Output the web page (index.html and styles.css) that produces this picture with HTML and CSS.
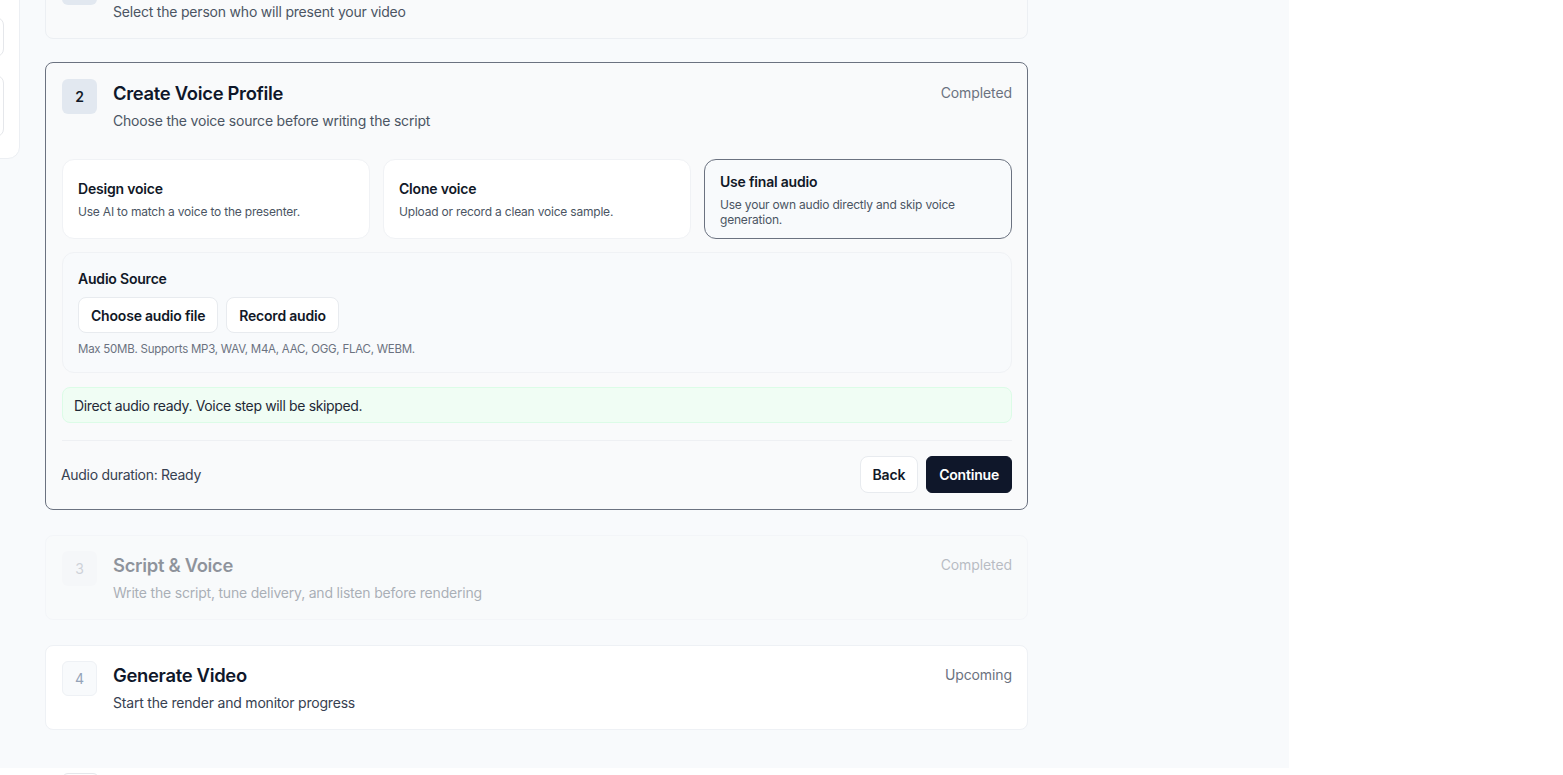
FILE: index.html
```html
<!DOCTYPE html>
<html lang="en">
<head>
  <meta charset="UTF-8" />
  <meta name="viewport" content="width=device-width, initial-scale=1.0">
  <title>Create video</title>
  <link rel="stylesheet" href="styles.css">
</head>
<body>

  <div class="layout">
    <div class="workspace">

      <!-- left project panel (collapsed off to the side) -->
      <aside class="side-strip">
        <div class="side-panel">
          <div class="side-item"></div>
          <div class="side-item tall"></div>
        </div>
      </aside>

      <main class="steps">

        <!-- step 1 -->
        <section class="step step-done first">
          <div class="step-head">
            <div class="step-num">1</div>
            <div class="step-text">
              <h2>Choose Presenter</h2>
              <p>Select the person who will present your video</p>
            </div>
            <span class="step-status">Completed</span>
          </div>
        </section>

        <!-- step 2 (active) -->
        <section class="step step-active">
          <div class="step-head">
            <div class="step-num">2</div>
            <div class="step-text">
              <h2>Create Voice Profile</h2>
              <p>Choose the voice source before writing the script</p>
            </div>
            <span class="step-status">Completed</span>
          </div>

          <div class="voice-options">
            <div class="option">
              <strong>Design voice</strong>
              <span>Use AI to match a voice to the presenter.</span>
            </div>
            <div class="option">
              <strong>Clone voice</strong>
              <span>Upload or record a clean voice sample.</span>
            </div>
            <div class="option selected">
              <strong>Use final audio</strong>
              <span>Use your own audio directly and skip voice generation.</span>
            </div>
          </div>

          <div class="audio-source">
            <div class="source-label">Audio Source</div>
            <div class="source-buttons">
              <button class="btn">Choose audio file</button>
              <button class="btn">Record audio</button>
            </div>
            <div class="source-hint">Max 50MB. Supports MP3, WAV, M4A, AAC, OGG, FLAC, WEBM.</div>
          </div>

          <div class="notice">Direct audio ready. Voice step will be skipped.</div>

          <div class="step-footer">
            <span class="duration">Audio duration: Ready</span>
            <div class="footer-actions">
              <button class="btn">Back</button>
              <button class="btn btn-dark">Continue</button>
            </div>
          </div>
        </section>

        <!-- step 3 -->
        <section class="step step-faded">
          <div class="step-head">
            <div class="step-num">3</div>
            <div class="step-text">
              <h2>Script &amp; Voice</h2>
              <p>Write the script, tune delivery, and listen before rendering</p>
            </div>
            <span class="step-status">Completed</span>
          </div>
        </section>

        <!-- step 4 -->
        <section class="step step-upcoming">
          <div class="step-head">
            <div class="step-num">4</div>
            <div class="step-text">
              <h2>Generate Video</h2>
              <p>Start the render and monitor progress</p>
            </div>
            <span class="step-status">Upcoming</span>
          </div>
        </section>

      </main>
    </div>

    <div class="right-side"></div>
  </div>

  <div class="below">
    <div class="below-box"></div>
  </div>

</body>
</html>
```

FILE: styles.css
```css
body {
  font-family: Inter, 'Noto Sans', sans-serif;
  margin: 0;
  background-color: #fff;
  color: #111827;
  overflow: hidden;
}

.layout {
  display: flex;
  height: 768px;
}

.workspace {
  width: 1289px;
  display: flex;
  background-color: #f8fafc;
  overflow: hidden;
}

.right-side {
  flex: 1;
  background: #fff;
}

/* narrow strip with the edge of the project panel */
.side-strip {
  width: 20px;
  flex-shrink: 0;
  overflow: hidden;
  display: flex;
  justify-content: flex-end;
  align-items: flex-start;
}

.side-panel {
  flex-shrink: 0;
  width: 240px;
  margin-top: -60px;
  padding: 76px 15px 21px;
  background: #fff;
  border: 1px solid #eceff3;
  border-radius: 12px;
  display: flex;
  flex-direction: column;
  gap: 18px;
}

.side-item {
  height: 38px;
  border: 1px solid #e5e7eb;
  border-radius: 8px;
}

.side-item.tall {
  height: 60px;
}

.steps {
  width: 983px;
  padding-left: 25px;
  display: flex;
  flex-direction: column;
  gap: 25px;
}

.step {
  border: 1px solid #eceff3;
  border-radius: 8px;
  padding: 15px 15px 16px 16px;
  background: #f9fafb;
}

/* first step is scrolled partly out of view */
.step.first {
  margin-top: -46px;
  margin-bottom: -2px;
}

.step-head {
  display: flex;
  align-items: flex-start;
}

.step-num {
  width: 35px;
  height: 35px;
  flex-shrink: 0;
  border-radius: 6px;
  background: #e2e8f0;
  display: flex;
  align-items: center;
  justify-content: center;
  font-size: 14px;
  font-weight: 600;
  color: #111827;
  margin-right: 16px;
  box-sizing: border-box;
}

.step-text {
  flex: 1;
}

.step-text h2 {
  margin: 0;
  font-size: 18.4px;
  line-height: 28px;
  font-weight: 600;
  letter-spacing: -0.3px;
  color: #0f172a;
}

.step-text p {
  margin: 4px 0 0;
  font-size: 14px;
  line-height: 20px;
  color: #4b5563;
  letter-spacing: -0.2px;
}

.step-status {
  font-size: 14px;
  line-height: 28px;
  color: #6b7280;
  letter-spacing: -0.1px;
}

.step-active {
  border-color: #6b7280;
  padding-top: 16px;
  padding-bottom: 16px;
  background: #f9fafb;
}

.step-faded {
  opacity: 0.45;
  border-color: #eef1f5;
}

.step-faded .step-num {
  background: #f3f4f6;
  color: #9ca3af;
  font-weight: 400;
}

.step-upcoming {
  background: #fff;
  border-color: #eef1f5;
}

.step-upcoming .step-num {
  background: #f8fafc;
  border: 1px solid #eef1f5;
  color: #94a3b8;
  font-weight: 400;
}

.step-upcoming .step-text p {
  color: #374151;
}

/* voice source choices */
.voice-options {
  display: grid;
  grid-template-columns: repeat(3, 1fr);
  gap: 13px;
  margin-top: 28px;
}

.option {
  min-height: 80px;
  box-sizing: border-box;
  padding: 10px 15px;
  background: #fff;
  border: 1px solid #f0f2f5;
  border-radius: 12px;
  display: flex;
  flex-direction: column;
  justify-content: center;
}

.option strong {
  font-size: 14px;
  line-height: 20px;
  font-weight: 600;
  color: #111827;
  letter-spacing: -0.2px;
}

.option span {
  margin-top: 5px;
  font-size: 12px;
  line-height: 15px;
  color: #4b5563;
  letter-spacing: -0.2px;
}

.option.selected {
  border-color: #6b7280;
  background: #f8fafc;
}

.audio-source {
  margin-top: 13px;
  padding: 16px 15px 16px;
  border: 1px solid #f0f2f5;
  border-radius: 12px;
  background: #f8fafc;
}

.source-label {
  font-size: 14px;
  line-height: 20px;
  font-weight: 600;
  letter-spacing: -0.2px;
}

.source-buttons {
  display: flex;
  gap: 8px;
  margin-top: 8px;
}

.btn {
  font-family: inherit;
  font-size: 14px;
  font-weight: 600;
  letter-spacing: -0.2px;
  color: #111827;
  background: #fff;
  border: 1px solid #e8ebef;
  border-radius: 8px;
  padding: 0 12px;
  height: 37px;
  cursor: pointer;
}

.source-buttons .btn {
  height: 36px;
}

.source-hint {
  margin-top: 9px;
  font-size: 11.5px;
  line-height: 14px;
  color: #6b7280;
  letter-spacing: -0.25px;
}

.notice {
  margin-top: 14px;
  height: 36px;
  box-sizing: border-box;
  padding: 0 11px;
  display: flex;
  align-items: center;
  font-size: 14px;
  color: #1f2937;
  background: #f0fdf4;
  border: 1px solid #dcfce7;
  border-radius: 8px;
  letter-spacing: -0.35px;
}

.step-footer {
  margin-top: 17px;
  padding-top: 15px;
  border-top: 1px solid #eef0f3;
  display: flex;
  align-items: center;
  justify-content: space-between;
}

.duration {
  font-size: 14px;
  color: #374151;
  letter-spacing: -0.3px;
  margin-left: -1px;
}

.footer-actions {
  display: flex;
  gap: 8px;
}

.btn-dark {
  background: #0f172a;
  border-color: #0f172a;
  color: #fff;
  border-radius: 6px;
}

.below {
  padding: 5px 0 0 62px;
}

.below-box {
  width: 35px;
  height: 20px;
  border: 1px solid #e5e7eb;
  border-radius: 6px;
}
```
